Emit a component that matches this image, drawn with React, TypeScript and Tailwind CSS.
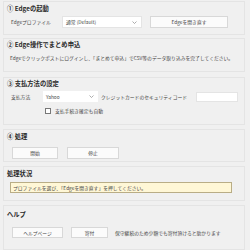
const font = { fontFamily: '"Noto Sans CJK JP", "Noto Sans", sans-serif' };

function Chevron() {
  return (
    <svg width="5" height="3" viewBox="0 0 5 3" className="shrink-0">
      <path d="M0.5 0.5 L2.5 2.5 L4.5 0.5" fill="none" stroke="#8a8a8a" strokeWidth="0.7" />
    </svg>
  );
}

function Section({ h, pt, children }: { h: string; pt: string; children: React.ReactNode }) {
  return (
    <div className={`ml-[3px] mr-[5px] border border-[#e4e4e4] ${h} ${pt}`}>{children}</div>
  );
}

function Title({ children }: { children: React.ReactNode }) {
  return (
    <div className="h-[10px] pl-[3px] text-[6.3px] font-bold leading-[10px] text-[#2a2a2a]">{children}</div>
  );
}

function Btn({ w, h, children }: { w: string; h: string; children: React.ReactNode }) {
  return (
    <div
      className={`${w} ${h} flex items-center justify-center border border-[#d8d8d8] bg-[#fbfbfb] text-[4.8px] text-[#444]`}
    >
      {children}
    </div>
  );
}

export default function App() {
  return (
    <div className="h-[250px] w-[250px] overflow-hidden bg-[#f0f0f0] pt-[1px]" style={font}>
      <Section h="h-[34px]" pt="pt-[2px]">
        <Title>① Edgeの起動</Title>
        <div className="mt-[2px] flex h-[12px] items-center text-[4.8px] text-[#444]">
          <span className="ml-[7px] w-[51px]">Edgeプロファイル</span>
          <div className="flex h-[12px] w-[80px] items-center justify-between border border-[#e4e4e4] bg-white pl-[3px] pr-[4px]">
            <span>通常 (Default)</span>
            <Chevron />
          </div>
          <div className="ml-[8px]">
            <Btn w="w-[78px]" h="h-[12px]">Edgeを開き直す</Btn>
          </div>
        </div>
      </Section>

      <div className="mt-[3px]">
        <Section h="h-[34px]" pt="pt-[1px]">
          <Title>② Edge操作でまとめ申込</Title>
          <div className="ml-[6px] mt-[4px] h-[8px] whitespace-nowrap text-[4.8px] leading-[8px] text-[#444]">
            Edgeでクリックポストにログインし、「まとめて申込」でCSV等のデータ取り込みを完了してください。
          </div>
        </Section>
      </div>

      <div className="mt-[5px]">
        <Section h="h-[48px]" pt="pt-[1px]">
          <Title>③ 支払方法の設定</Title>
          <div className="mt-[2px] flex h-[11px] items-center text-[4.8px] text-[#444]">
            <span className="ml-[7px] w-[32px]">支払方法</span>
            <div className="flex h-[11px] w-[55px] items-center justify-between bg-white pl-[3px] pr-[4px]">
              <span>Yahoo</span>
              <Chevron />
            </div>
            <span className="ml-[3px] w-[95px] whitespace-nowrap">クレジットカードのセキュリティコード</span>
            <div className="h-[10px] w-[42px] border border-[#e4e4e4] bg-white" />
          </div>
          <div className="mt-[4px] flex h-[10px] items-center text-[4.8px] text-[#444]">
            <div className="ml-[41px] h-[6px] w-[6px] border border-[#777] bg-white" />
            <span className="ml-[4px]">支払手続き確定も自動</span>
          </div>
        </Section>
      </div>

      <div className="mt-[4px]">
        <Section h="h-[33px]" pt="pt-[2px]">
          <Title>④ 処理</Title>
          <div className="ml-[8px] mt-[5px] flex gap-[9px]">
            <Btn w="w-[46px]" h="h-[12px]">開始</Btn>
            <Btn w="w-[52px]" h="h-[12px]">停止</Btn>
          </div>
        </Section>
      </div>

      <div className="mt-[4px]">
        <Section h="h-[35px]" pt="pt-[2px]">
          <Title>処理状況</Title>
          <div className="ml-[6px] mt-[3px] flex h-[11px] w-[222px] items-center border border-[#b9ad86] bg-[#fff7d6] pl-[2px] text-[4.8px] text-[#444]">
            プロファイルを選び、「Edgeを開き直す」を押してください。
          </div>
        </Section>
      </div>

      <div className="mt-[4px]">
        <Section h="h-[45px]" pt="pt-[4px]">
          <Title>ヘルプ</Title>
          <div className="ml-[8px] mt-[7px] flex items-center text-[4.8px] text-[#444]">
            <Btn w="w-[51px]" h="h-[11px]">ヘルプページ</Btn>
            <div className="ml-[8px]">
              <Btn w="w-[37px]" h="h-[11px]">寄付</Btn>
            </div>
            <span className="ml-[7px] whitespace-nowrap">保守継続のため少額でも寄付頂けると助かります</span>
          </div>
        </Section>
      </div>
    </div>
  );
}
